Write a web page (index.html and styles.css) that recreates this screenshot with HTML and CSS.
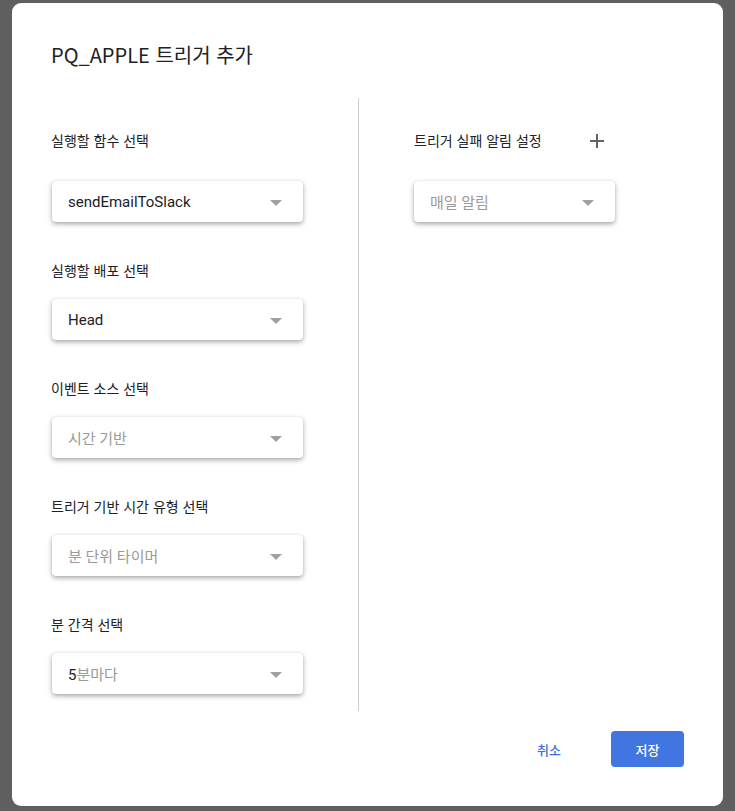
FILE: index.html
```html
<!DOCTYPE html>
<html lang="ko">
<head>
<meta charset="utf-8">
<title>PQ_APPLE 트리거 추가</title>
<link rel="stylesheet" href="styles.css">
</head>
<body>
<div class="dialog">
  <h1 class="title">PQ_APPLE 트리거 추가</h1>
  <div class="columns">
    <div class="col col-left">
      <div class="field first">
        <div class="label">실행할 함수 선택</div>
        <div class="select"><span class="value">sendEmailToSlack</span><span class="arrow"></span></div>
      </div>
      <div class="field">
        <div class="label">실행할 배포 선택</div>
        <div class="select"><span class="value">Head</span><span class="arrow"></span></div>
      </div>
      <div class="field">
        <div class="label">이벤트 소스 선택</div>
        <div class="select"><span class="value muted">시간 기반</span><span class="arrow"></span></div>
      </div>
      <div class="field">
        <div class="label">트리거 기반 시간 유형 선택</div>
        <div class="select"><span class="value muted">분 단위 타이머</span><span class="arrow"></span></div>
      </div>
      <div class="field">
        <div class="label">분 간격 선택</div>
        <div class="select"><span class="value">5<span class="muted">분마다</span></span><span class="arrow"></span></div>
      </div>
    </div>
    <div class="divider"></div>
    <div class="col col-right">
      <div class="field first">
        <div class="label-row">
          <div class="label">트리거 실패 알림 설정</div>
          <svg class="plus" width="14" height="14" viewBox="0 0 14 14"><path d="M7 0v14M0 7h14" stroke="#5f6368" stroke-width="2"/></svg>
        </div>
        <div class="select narrow"><span class="value muted">매일 알림</span><span class="arrow"></span></div>
      </div>
    </div>
  </div>
  <div class="footer">
    <button class="btn btn-text">취소</button>
    <button class="btn btn-primary">저장</button>
  </div>
</div>
</body>
</html>
```
FILE: styles.css
```css
html, body {
  margin: 0;
  padding: 0;
}
body {
  background: #5f5f5f;
  font-family: Roboto, "Noto Sans CJK KR", sans-serif;
  color: #202124;
  padding: 3px 0 0 12px;
  height: 811px;
  box-sizing: border-box;
  overflow: hidden;
}
.dialog {
  width: 711px;
  height: 803px;
  background: #fff;
  border-radius: 9px;
  box-sizing: border-box;
  padding: 0 39px;
  display: flex;
  flex-direction: column;
}
.title {
  margin: 0;
  padding-top: 39px;
  font-family: "Noto Sans CJK KR", Roboto, sans-serif;
  font-size: 20px;
  font-weight: 400;
  line-height: 26px;
  color: #202124;
  letter-spacing: 0;
}
.columns {
  margin-top: 30px;
  display: flex;
  align-items: stretch;
}
.col-left {
  width: 307px;
  padding-top: 32px;
  padding-bottom: 17px;
}
.divider {
  width: 1px;
  background: #cfcfcf;
}
.col-right {
  padding-left: 55px;
  padding-top: 32px;
}
.field {
  display: flex;
  flex-direction: column;
}
.field + .field {
  margin-top: 38px;
}
.label {
  font-family: "Noto Sans CJK KR", Roboto, sans-serif;
  font-size: 14px;
  line-height: 20px;
  color: #202124;
  margin-bottom: 19px;
}
.field.first .label {
  margin-bottom: 31px;
}
.label-row {
  display: flex;
  align-items: flex-start;
}
.label-row .plus {
  margin-left: 48px;
  margin-top: 4px;
}
.select {
  width: 251px;
  height: 41px;
  margin-left: 1px;
  box-sizing: border-box;
  border-radius: 4px;
  background: #fff;
  box-shadow: 0 2px 5px rgba(0, 0, 0, 0.35), 0 0 1px rgba(0, 0, 0, 0.15);
  display: flex;
  align-items: center;
  justify-content: space-between;
  padding: 0 21px 0 16px;
}
.select.narrow {
  width: 201px;
  margin-left: 0;
}
.value {
  font-family: Roboto, "Noto Sans CJK KR", sans-serif;
  font-size: 15px;
  color: #202124;
}
.muted {
  color: #9a9a9a;
}
.arrow {
  width: 0;
  height: 0;
  border-left: 6px solid transparent;
  border-right: 6px solid transparent;
  border-top: 6px solid #a0a0a0;
  margin-top: 2px;
}
.footer {
  margin-top: 20px;
  display: flex;
  justify-content: flex-end;
  align-items: center;
}
.btn {
  font-family: "Noto Sans CJK KR", Roboto, sans-serif;
  font-size: 13px;
  font-weight: 500;
  border: none;
  border-radius: 4px;
  height: 36px;
  cursor: pointer;
}
.btn-text {
  background: transparent;
  color: #3b6fdb;
  padding: 0 24px;
  margin-right: 26px;
}
.btn-primary {
  background: #4175e1;
  color: #fff;
  width: 73px;
}
```
